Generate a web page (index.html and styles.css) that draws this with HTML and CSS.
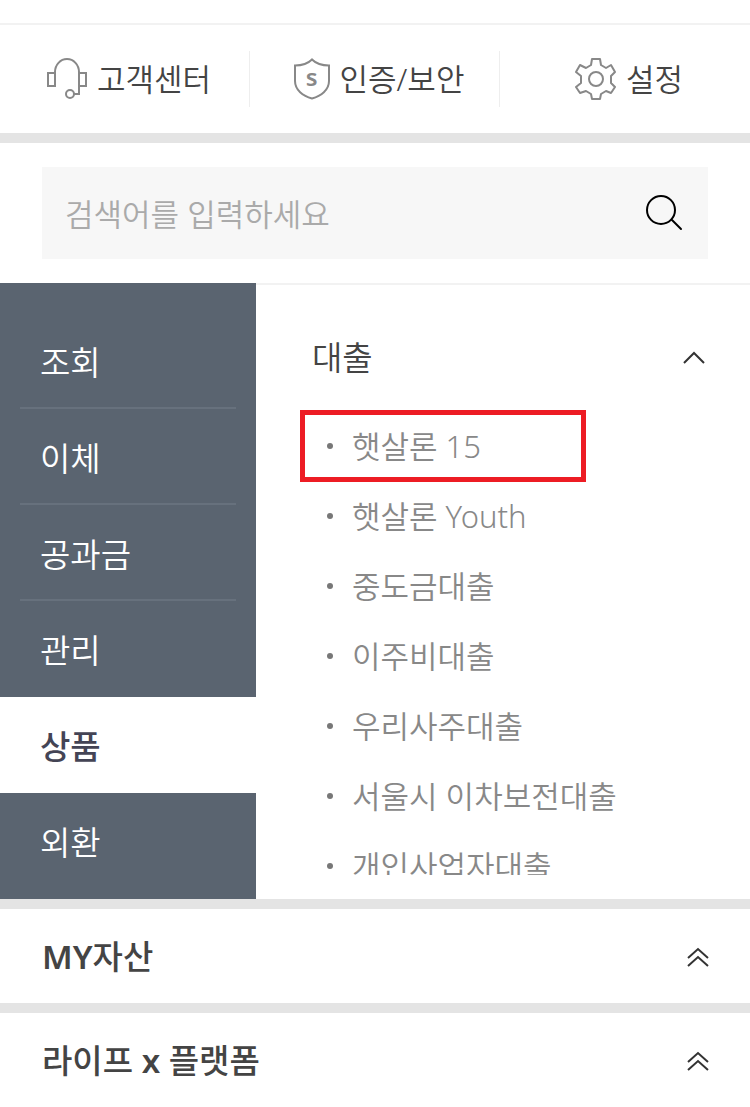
FILE: index.html
```html
<!DOCTYPE html>
<html lang="ko">
<head>
<meta charset="utf-8">
<meta name="viewport" content="width=device-width, initial-scale=1">
<title>전체 메뉴</title>
<link rel="stylesheet" href="styles.css">
</head>
<body>
<header class="top">
  <nav class="quick">
    <a class="quick-link" href="#">
      <svg class="icon" width="42" height="42" viewBox="0 0 42 42" fill="none" stroke="#888" stroke-width="2" aria-hidden="true">
        <path d="M2 15h7v13H2zM33 15h7v13h-7zM9 16v-2a12 13 0 0 1 24 0v22h-5"/>
        <circle cx="24" cy="36" r="4"/>
      </svg>
      <span>고객센터</span>
    </a>
    <a class="quick-link" href="#">
      <span class="shield">
        <svg class="icon" width="38" height="42" viewBox="0 0 38 42" fill="none" stroke="#888" stroke-width="2" aria-hidden="true">
          <path d="M19 1.500C15 5.500 8 7.500 2 7.500V23c0 9 8 15 17 17.500 9-2.500 17-8.500 17-17.500V7.500c-6 0-13-2-17-6z"/>
        </svg>
        <span class="shield-letter">s</span>
      </span>
      <span>인증/보안</span>
    </a>
    <a class="quick-link" href="#">
      <svg class="icon" width="42" height="44" viewBox="0 0 42 44" fill="none" stroke="#888" stroke-width="2" stroke-linejoin="round" aria-hidden="true">
        <path d="M17 2h8l1 6 5 3 5-3 4 7-4 4v7l4 4-4 6-5-2-5 3-1 5h-8l-1-5-5-3-6 2-4-6 5-4v-7l-5-4 4-7 6 3 5-3z"/>
        <circle cx="21" cy="22" r="7"/>
      </svg>
      <span>설정</span>
    </a>
  </nav>
</header>

<form class="search" role="search">
  <div class="search-box">
    <input class="search-input" type="text" placeholder="검색어를 입력하세요" aria-label="검색어">
    <button class="search-button" type="button" aria-label="검색">
      <svg width="38" height="38" viewBox="0 0 38 38" fill="none" stroke="#000" stroke-width="2" stroke-linecap="round" aria-hidden="true">
        <circle cx="15" cy="16" r="14"/>
        <path d="M26 26l9 9"/>
      </svg>
    </button>
  </div>
</form>

<main class="menu">
  <nav class="side">
    <a class="side-link" href="#">조회</a>
    <a class="side-link" href="#">이체</a>
    <a class="side-link" href="#">공과금</a>
    <a class="side-link" href="#">관리</a>
    <a class="side-link active" href="#" aria-current="page">상품</a>
    <a class="side-link" href="#">외환</a>
  </nav>
  <section class="panel">
    <div class="panel-view">
      <button class="panel-head" type="button" aria-expanded="true">
        <span>대출</span>
        <svg width="24" height="16" viewBox="0 0 24 16" fill="none" stroke="#333" stroke-width="2" aria-hidden="true"><path d="M2 13L12 3l10 10"/></svg>
      </button>
      <ul class="items">
        <li class="item marked"><a href="#">햇살론 15</a></li>
        <li class="item"><a href="#">햇살론 Youth</a></li>
        <li class="item"><a href="#">중도금대출</a></li>
        <li class="item"><a href="#">이주비대출</a></li>
        <li class="item"><a href="#">우리사주대출</a></li>
        <li class="item"><a href="#">서울시 이차보전대출</a></li>
        <li class="item"><a href="#">개인사업자대출</a></li>
      </ul>
    </div>
  </section>
</main>

<button class="drawer" type="button" aria-expanded="false">
  <span><span class="latin">MY</span>자산</span>
  <svg width="24" height="24" viewBox="0 0 24 24" fill="none" stroke="#333" stroke-width="2" aria-hidden="true"><path d="M2 13l10-9 10 9M2 21l10-9 10 9"/></svg>
</button>
<button class="drawer" type="button" aria-expanded="false">
  <span>라이프 <span class="latin">x</span> 플랫폼</span>
  <svg width="24" height="24" viewBox="0 0 24 24" fill="none" stroke="#333" stroke-width="2" aria-hidden="true"><path d="M2 13l10-9 10 9M2 21l10-9 10 9"/></svg>
</button>
</body>
</html>
```
FILE: styles.css
```css
*,
*::before,
*::after {
  box-sizing: border-box;
}

body {
  margin: 0;
  background: #fff;
  color: #444;
  font-family: "Noto Sans", "Noto Sans CJK KR", sans-serif;
  font-size: 31px;
  font-weight: 350;
  line-height: 44px;
}

a {
  color: inherit;
  text-decoration: none;
}

button,
input {
  border: 0;
  padding: 0;
  background: none;
  color: inherit;
  font: inherit;
}

svg {
  display: block;
  flex: none;
}

.top {
  padding-top: 23px;
  border-bottom: 10px solid #e4e4e4;
}

.quick {
  display: grid;
  grid-template-columns: repeat(3, 1fr);
  padding: 26px 0;
  border-top: 2px solid #f2f2f2;
}

.quick-link {
  display: flex;
  align-items: center;
  justify-content: center;
  gap: 9px;
  height: 56px;
  padding-left: 8px;
  border-right: 1px solid #eee;
}

.quick-link:last-child {
  border-right: 0;
}

.shield {
  position: relative;
}

.shield-letter {
  position: absolute;
  inset: 0;
  color: #888;
  font-size: 24px;
  font-weight: 600;
  line-height: 38px;
  text-align: center;
}

.search {
  padding: 24px 42px;
}

.search-box {
  display: flex;
  align-items: center;
  height: 92px;
  padding: 0 24px 0 23px;
  background: #f7f7f7;
}

.search-input {
  flex: 1;
  min-width: 0;
  height: 60px;
  padding-top: 2px;
}

.search-input::placeholder {
  color: #aaa;
  opacity: 1;
}

.menu {
  display: flex;
  border-bottom: 10px solid #e4e4e4;
}

.side {
  flex: none;
  width: 256px;
  padding: 30px 0 10px;
  background: #5a6470;
}

.side-link {
  display: block;
  height: 96px;
  margin: 0 20px;
  padding: 28px 20px 0;
  border-bottom: 2px solid #67717d;
  color: #fff;
  font-size: 33px;
}

.side-link:nth-child(4),
.side-link:last-child {
  border-bottom-color: transparent;
}

.side-link.active {
  margin: 0;
  padding: 28px 40px 0;
  border-bottom: 0;
  background: #fff;
  color: #445;
  font-weight: 500;
}

.panel {
  flex: 1;
  min-width: 0;
  padding: 0 0 24px 44px;
  border-top: 2px solid #f2f2f2;
}

.panel-view {
  height: 590px;
  overflow: hidden;
}

.panel-head {
  display: flex;
  align-items: center;
  justify-content: space-between;
  width: 100%;
  height: 126px;
  padding: 20px 44px 0 12px;
  font-size: 33px;
}

.items {
  margin: 0;
  padding: 0;
  list-style: none;
}

.item {
  position: relative;
  display: flex;
  align-items: center;
  gap: 19px;
  height: 70px;
  padding-left: 27px;
  color: #888;
}

.item::before {
  content: "";
  width: 6px;
  height: 6px;
  border-radius: 50%;
  background: #777;
}

.marked::after {
  content: "";
  position: absolute;
  top: -1px;
  left: 0;
  width: 286px;
  height: 72px;
  border: 5px solid #ed1c24;
}

.drawer {
  display: flex;
  align-items: center;
  justify-content: space-between;
  width: 100%;
  height: 94px;
  padding: 2px 40px 0 42px;
  font-size: 33px;
  font-weight: 500;
}

.drawer + .drawer {
  height: 104px;
  border-top: 10px solid #e4e4e4;
}

.latin {
  font-weight: 600;
}
```
